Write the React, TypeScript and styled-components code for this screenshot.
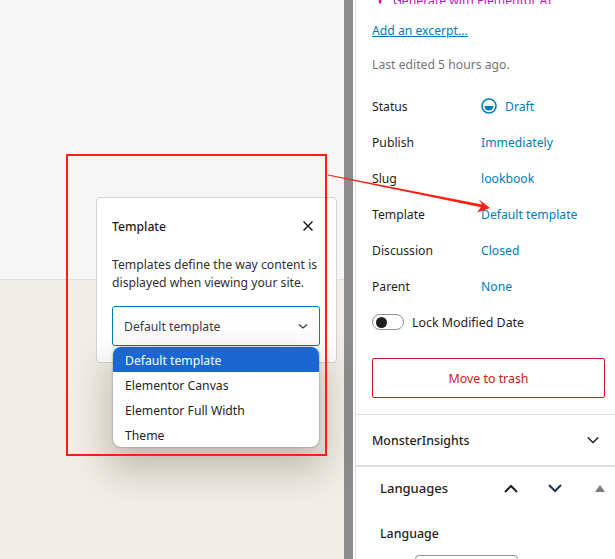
import React from 'react';
import styled, { createGlobalStyle } from 'styled-components';

const GlobalStyle = createGlobalStyle`
  html, body {
    margin: 0;
    padding: 0;
    background: #fff;
  }
  * {
    box-sizing: border-box;
  }
`;

const Page = styled.div`
  position: relative;
  display: flex;
  width: 615px;
  height: 559px;
  overflow: hidden;
  font-family: 'Noto Sans', 'Open Sans', sans-serif;
  font-size: 12.2px;
  color: #1e1e1e;
`;

const Canvas = styled.div`
  position: relative;
  display: flex;
  flex-direction: column;
  width: 344px;
  flex-shrink: 0;
`;

const CanvasTop = styled.div`
  height: 280px;
  background: #f6f6f6;
  border-bottom: 1px solid #dddddd;
`;

const CanvasBottom = styled.div`
  flex: 1;
  background: #f0eee6;
`;

const Popover = styled.div`
  position: absolute;
  left: 96px;
  top: 197px;
  width: 241px;
  height: 166px;
  padding: 15px 16px 0;
  background: #fff;
  border: 1px solid #d4d4d4;
  border-radius: 4px;
`;

const PopoverHeader = styled.div`
  display: flex;
  align-items: center;
  justify-content: space-between;
  height: 26px;
  margin-left: -1px;
  padding-right: 5px;
`;

const PopoverTitle = styled.span`
  font-weight: 500;
`;

const CloseIcon = styled.svg`
  width: 14px;
  height: 14px;
`;

const PopoverText = styled.p`
  margin: 17px 0 0 -1px;
  line-height: 18px;
  color: #2f2f2f;
  white-space: nowrap;
`;

const SelectBox = styled.div`
  display: flex;
  align-items: center;
  justify-content: space-between;
  width: 208px;
  height: 40px;
  margin: 14px 0 0 -1px;
  padding: 0 11px;
  border: 1.5px solid #007cba;
  border-radius: 3px;
  color: #3c3c3c;
  background: #fff;
`;

const SmallChevron = styled.svg<{ $size: number }>`
  width: ${(p) => p.$size}px;
  height: ${(p) => p.$size}px;
`;

const Menu = styled.ul`
  position: absolute;
  left: 113px;
  top: 347px;
  width: 206px;
  height: 100px;
  margin: 0;
  padding: 0;
  list-style: none;
  background: #fff;
  border-radius: 8px;
  overflow: hidden;
  box-shadow: 0 0 2px rgba(0, 0, 0, 0.45), 0 18px 36px 6px rgba(40, 35, 20, 0.24);
`;

const MenuItem = styled.li<{ $selected?: boolean }>`
  display: flex;
  align-items: center;
  height: 25px;
  padding: 1px 0 0 12px;
  background: ${(p) => (p.$selected ? '#1a67d2' : 'transparent')};
  color: ${(p) => (p.$selected ? '#fff' : '#1e1e1e')};
`;

const Highlight = styled.div`
  position: absolute;
  left: 66px;
  top: 154px;
  width: 261px;
  height: 302px;
  border: 2px solid #fb1f14;
  pointer-events: none;
`;

const ArrowOverlay = styled.svg`
  position: absolute;
  left: 320px;
  top: 165px;
  width: 180px;
  height: 60px;
  pointer-events: none;
`;

const Gutter = styled.div`
  width: 9px;
  flex-shrink: 0;
  background: #8c8c8c;
`;

const GutterGap = styled.div`
  width: 2px;
  flex-shrink: 0;
  background: #fff;
`;

const Sidebar = styled.aside`
  flex: 1;
  min-width: 0;
  border-left: 1px solid #dddddd;
  background: #fff;
`;

const Panel = styled.div`
  padding: 0 10px 16px 16px;
  border-bottom: 1px solid #e0e0e0;
`;

const ClippedRow = styled.div`
  display: flex;
  align-items: flex-end;
  gap: 8px;
  height: 4px;
  overflow: hidden;
  padding-left: 3px;
  color: #c20fc9;
  line-height: 6px;
  white-space: nowrap;
`;

const SparkIcon = styled.svg`
  width: 10px;
  height: 10px;
  flex-shrink: 0;
`;

const ExcerptLink = styled.a`
  display: block;
  margin-top: 17px;
  line-height: 20px;
  color: #007cba;
  text-decoration: underline;
`;

const LastEdited = styled.p`
  margin: 14px 0 13px;
  line-height: 20px;
  color: #757575;
`;

const InfoRow = styled.div<{ $large?: boolean }>`
  display: flex;
  align-items: center;
  height: 36px;
  font-size: ${(p) => (p.$large ? '12.4px' : 'inherit')};
`;

const InfoLabel = styled.span`
  width: 109px;
  flex-shrink: 0;
`;

const InfoValue = styled.span`
  display: flex;
  align-items: center;
  gap: 8px;
  color: #007cba;
`;

const Toggle = styled.span`
  display: flex;
  align-items: center;
  width: 32px;
  height: 16px;
  margin-right: 8px;
  padding-left: 3px;
  border: 1px solid #8f8f8f;
  border-radius: 8px;
  background: #fff;
`;

const ToggleKnob = styled.span`
  width: 11px;
  height: 11px;
  border-radius: 50%;
  background: #1e1e1e;
`;

const TrashButton = styled.button`
  display: block;
  width: 233px;
  height: 40px;
  margin-top: 18px;
  padding: 0;
  font: inherit;
  font-size: 12.4px;
  color: #cc1818;
  background: #fff;
  border: 1px solid #cc1818;
  border-radius: 2px;
`;

const SectionHeader = styled.div`
  display: flex;
  align-items: center;
  justify-content: space-between;
  height: 52px;
  padding: 0 16px;
  border-bottom: 2px solid #e0e0e0;
  font-size: 12.4px;
  font-weight: 500;
`;

const LanguagesHeader = styled.div`
  display: flex;
  align-items: center;
  height: 42px;
  padding: 0 10px 0 24px;
  font-size: 13px;
  font-weight: 500;
`;

const HeaderControls = styled.div`
  display: flex;
  align-items: center;
  gap: 30px;
  margin-left: auto;
`;

const BoldChevron = styled.svg`
  width: 14px;
  height: 9px;
`;

const Triangle = styled.span`
  width: 0;
  height: 0;
  margin-left: 3px;
  border-left: 5px solid transparent;
  border-right: 5px solid transparent;
  border-bottom: 7px solid #7d7d7d;
`;

const LanguageBlock = styled.div`
  padding: 15px 0 0 24px;
  font-size: 12.4px;
  font-weight: 500;
  line-height: 20px;
  color: #1d2327;
`;

const LanguageSelect = styled.div`
  width: 103px;
  height: 20px;
  margin: 11px 0 0 35px;
  background: #fff;
  border: 1px solid #8c8f94;
  border-radius: 4px;
`;

const Chevron = ({ up, color }: { up?: boolean; color: string }) => (
  <BoldChevron viewBox="0 0 14 9" fill="none">
    <path
      d={up ? 'M1 8 L7 2 L13 8' : 'M1 1 L7 7 L13 1'}
      stroke={color}
      strokeWidth="2"
    />
  </BoldChevron>
);

const details = [
  { label: 'Publish', value: 'Immediately' },
  { label: 'Slug', value: 'lookbook' },
  { label: 'Template', value: 'Default template' },
  { label: 'Discussion', value: 'Closed' },
  { label: 'Parent', value: 'None' },
];

export default function App() {
  return (
    <Page>
      <GlobalStyle />
      <Canvas>
        <CanvasTop />
        <CanvasBottom />
      </Canvas>
      <Gutter />
      <GutterGap />
      <Sidebar>
        <Panel>
          <ClippedRow>
            <SparkIcon viewBox="0 0 10 10">
              <path d="M5 0 L6.5 8 L5 10 L3.5 8 Z M1 4 L9 4 L9 6 L1 6 Z" fill="#c20fc9" />
            </SparkIcon>
            Generate with Elementor AI
          </ClippedRow>
          <ExcerptLink>Add an excerpt...</ExcerptLink>
          <LastEdited>Last edited 5 hours ago.</LastEdited>
          <InfoRow>
            <InfoLabel>Status</InfoLabel>
            <InfoValue>
              <svg width="16" height="16" viewBox="0 0 16 16">
                <circle cx="8" cy="8" r="7" fill="none" stroke="#007cba" strokeWidth="1.6" />
                <path d="M3.5 8 H12.5 A4.5 4.5 0 0 1 3.5 8 Z" fill="#007cba" />
              </svg>
              Draft
            </InfoValue>
          </InfoRow>
          {details.map((row) => (
            <InfoRow key={row.label}>
              <InfoLabel>{row.label}</InfoLabel>
              <InfoValue>{row.value}</InfoValue>
            </InfoRow>
          ))}
          <InfoRow $large>
            <Toggle>
              <ToggleKnob />
            </Toggle>
            Lock Modified Date
          </InfoRow>
          <TrashButton>Move to trash</TrashButton>
        </Panel>
        <SectionHeader>
          MonsterInsights
          <SmallChevron $size={12} viewBox="0 0 12 12" fill="none">
            <path d="M0.7 3.5 L6 8.5 L11.3 3.5" stroke="#1e1e1e" strokeWidth="1.4" />
          </SmallChevron>
        </SectionHeader>
        <LanguagesHeader>
          Languages
          <HeaderControls>
            <Chevron up color="#1d2327" />
            <Chevron color="#1d3557" />
            <Triangle />
          </HeaderControls>
        </LanguagesHeader>
        <LanguageBlock>
          Language
          <LanguageSelect />
        </LanguageBlock>
      </Sidebar>
      <Popover>
        <PopoverHeader>
          <PopoverTitle>Template</PopoverTitle>
          <CloseIcon viewBox="0 0 14 14" fill="none">
            <path d="M2.5 2.5 L11.5 11.5 M11.5 2.5 L2.5 11.5" stroke="#1e1e1e" strokeWidth="1.5" />
          </CloseIcon>
        </PopoverHeader>
        <PopoverText>
          Templates define the way content is
          <br />
          displayed when viewing your site.
        </PopoverText>
        <SelectBox>
          Default template
          <SmallChevron $size={10} viewBox="0 0 10 10" fill="none">
            <path d="M1 3.5 L5 7 L9 3.5" stroke="#3c3c3c" strokeWidth="1.3" />
          </SmallChevron>
        </SelectBox>
      </Popover>
      <Menu>
        <MenuItem $selected>Default template</MenuItem>
        <MenuItem>Elementor Canvas</MenuItem>
        <MenuItem>Elementor Full Width</MenuItem>
        <MenuItem>Theme</MenuItem>
      </Menu>
      <Highlight />
      <ArrowOverlay viewBox="0 0 180 60">
        <polygon points="8,9.5 162,39.5 159,34.5 170,43 157,47.5 161,42.3 8,10.5" fill="#fb1f14" />
      </ArrowOverlay>
    </Page>
  );
}
